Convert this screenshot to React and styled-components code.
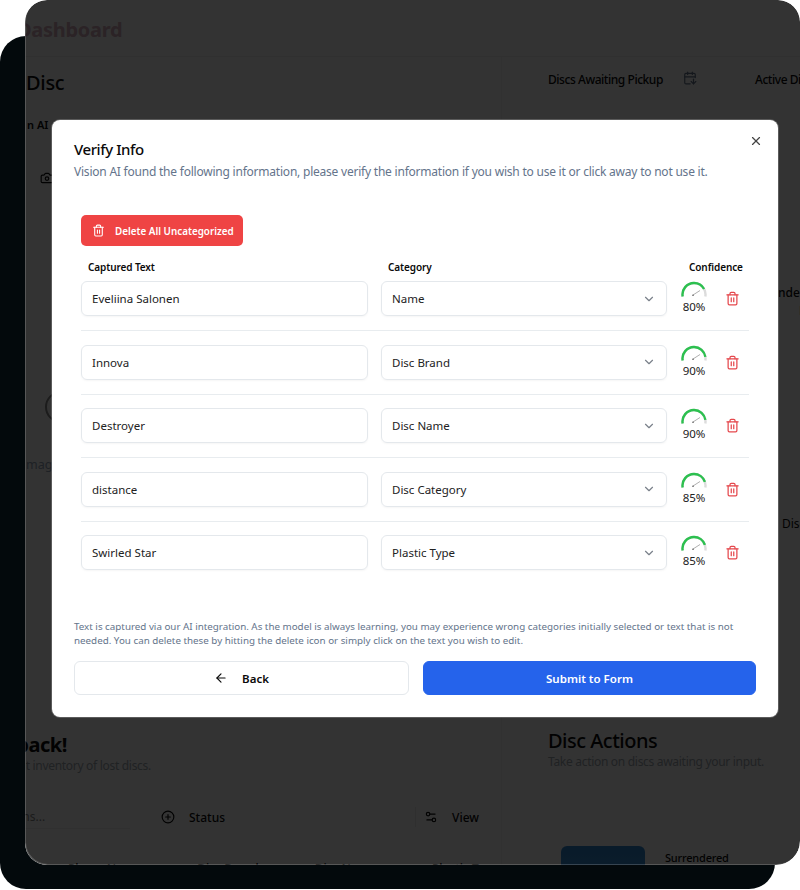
import React from "react";
import styled, { createGlobalStyle } from "styled-components";
import { ArrowLeft, CalendarArrowDown, Camera, ChevronDown, CirclePlus, Settings2, Trash2, X } from "lucide-react";

const Global = createGlobalStyle`
  html, body { margin: 0; padding: 0; background: #fff; }
  body { font-family: "Noto Sans", "Open Sans", sans-serif; color: #0a0a0a; }
  * { box-sizing: border-box; }
`;

const Page = styled.div`
  position: relative;
  width: 800px;
  height: 890px;
  overflow: hidden;
  background: #fff;
`;
const BackPlate = styled.div`
  position: absolute;
  left: 0;
  top: 36px;
  width: 775px;
  height: 853px;
  border-radius: 26px;
  background: #03090c;
`;
const Window = styled.div`
  position: absolute;
  left: 25px;
  top: 0;
  width: 775px;
  height: 865px;
  border-radius: 22px 22px 24px 22px;
  overflow: hidden;
  background: #fff;
`;
const Dim = styled.div`
  position: absolute;
  inset: 0;
  border-radius: inherit;
  background: rgba(0, 0, 0, 0.8);
  box-shadow: inset 1px -1px 0 0 rgba(255, 255, 255, 0.18);
`;
const AppHeader = styled.header`
  height: 57px;
  padding-top: 15px;
  margin-left: -8px;
  border-bottom: 1px solid #ededed;
`;
const AppTitle = styled.h1`
  margin: 0;
  font-size: 20px;
  line-height: 30px;
  font-weight: 700;
  letter-spacing: -0.3px;
  color: #d4aebc;
`;
const Columns = styled.div`
  display: grid;
  grid-template-columns: 477px 300px;
  height: 808px;
`;
const LeftCol = styled.div`
  border-right: 1px solid #f3f3f3;
`;
const CardTitle = styled.h2`
  margin: 0 0 0 1px;
  padding-top: 12px;
  font-size: 20px;
  line-height: 28px;
  font-weight: 500;
  letter-spacing: -0.3px;
`;
const Tab = styled.div`
  margin: 19px 0 0 2px;
  font-size: 11px;
  line-height: 18px;
  font-weight: 600;
`;
const CameraRow = styled.div`
  padding: 37px 0 0 15px;
  height: 61px;
  svg { display: block; }
`;
const Placeholder = styled.div`
  height: 290px;
  display: flex;
  flex-direction: column;
  gap: 34px;
  padding-top: 196px;
`;
const Ring = styled.div`
  width: 32px;
  height: 32px;
  margin-left: 20px;
  border: 2px solid #8a8a8a;
  border-radius: 50%;
`;
const PlaceholderText = styled.div`
  font-size: 12.5px;
  line-height: 16px;
  margin-left: 1px;
  color: #94a3b8;
`;
const SectionTitle = styled.h2`
  margin: 0 0 0 ${(p) => p.$left || 0}px;
  font-size: 20px;
  line-height: 28px;
  font-weight: ${(p) => p.$weight || 500};
  letter-spacing: -0.5px;
  white-space: nowrap;
`;
const SectionText = styled.p`
  margin: -2px 0 0 ${(p) => p.$left || 0}px;
  font-size: 12px;
  line-height: 18px;
  letter-spacing: -0.3px;
  color: #a0a8b0;
  white-space: nowrap;
`;
const Welcome = styled.div`
  margin-top: 246px;
`;
const FilterBar = styled.div`
  display: flex;
  align-items: center;
  height: 24px;
  margin-top: 30px;
  font-size: 12px;
  font-weight: 500;
`;
const Search = styled.div`
  flex: none;
  width: 174px;
  height: 24px;
  margin-left: -69px;
  line-height: 24px;
  font-weight: 400;
  color: #888;
  border-bottom: 1px solid #efefef;
`;
const FilterLabel = styled.span`
  display: inline-flex;
  align-items: center;
  gap: 14px;
  margin-left: ${(p) => p.$left}px;
`;
const Divider = styled.span`
  width: 1px;
  height: 20px;
  margin-left: 190px;
  background: #e8e8e8;
`;
const TableHead = styled.div`
  display: flex;
  margin: 31px 0 0 43px;
  gap: 56px;
  font-size: 12px;
  line-height: 18px;
  font-weight: 500;
  white-space: nowrap;
`;
const RightCol = styled.div`
  padding-left: 46px;
`;
const StatRow = styled.div`
  display: grid;
  grid-template-columns: 149px 120px;
  height: 80px;
  padding-top: 14px;
  font-size: 12px;
  font-weight: 500;
  letter-spacing: -0.45px;
  svg { color: #64748b; }
`;
const Stat = styled.div`
  display: flex;
  align-items: flex-start;
  justify-content: space-between;
  white-space: nowrap;
  line-height: 18px;
  &:last-child { padding-left: 58px; }
`;
const StatValue = styled.div`
  margin: 25px 0 0 ${(p) => p.$left || 0}px;
  font-size: 20px;
  line-height: 28px;
  font-weight: 700;
`;
const PeekText = styled.div`
  margin: ${(p) => p.$top || 0}px 0 0 ${(p) => p.$left}px;
  font-size: 12px;
  line-height: 18px;
  font-weight: ${(p) => p.$weight || 400};
  white-space: nowrap;
`;
const Aside = styled.div`
  margin-top: 194px;
`;
const Thumb = styled.div`
  display: flex;
  gap: 20px;
  margin: 75px 0 0 13px;
`;
const ThumbImage = styled.div`
  width: 84px;
  height: 60px;
  border-radius: 6px;
  background: linear-gradient(#2f86cf, #3f9be4);
`;
const ThumbLabel = styled.span`
  font-size: 11px;
  line-height: 24px;
  font-weight: 500;
  letter-spacing: -0.2px;
`;

const Modal = styled.section`
  position: absolute;
  left: 52px;
  top: 120px;
  width: 726px;
  height: 597px;
  padding: 19px 22px 22px;
  border-radius: 8px;
  background: #fff;
  display: flex;
  flex-direction: column;
  box-shadow: 0 0 0 1px rgba(255, 255, 255, 0.2);
`;
const Close = styled.button`
  position: absolute;
  top: 14px;
  right: 15px;
  width: 14px;
  height: 14px;
  padding: 0;
  border: 0;
  background: none;
  color: #444;
  svg { display: block; }
`;
const ModalTitle = styled.h2`
  margin: 0;
  font-size: 15px;
  line-height: 20px;
  font-weight: 500;
  letter-spacing: -0.42px;
  color: #0a0a0a;
`;
const ModalText = styled.p`
  margin: 4px 0 0;
  font-size: 12px;
  line-height: 18px;
  letter-spacing: -0.22px;
  color: #64748b;
`;
const Body = styled.div`
  padding: 34px 7px 0;
  flex: 1;
`;
const DangerButton = styled.button`
  display: inline-flex;
  align-items: center;
  gap: 10px;
  width: 162px;
  height: 31px;
  padding: 0 0 0 11px;
  border: 0;
  border-radius: 5px;
  background: #ef4444;
  color: #fff;
  font: 600 9.85px "Noto Sans", sans-serif;
  white-space: nowrap;
  svg { display: block; }
`;
const Grid = styled.div`
  display: grid;
  grid-template-columns: 287px 286px 1fr;
  column-gap: 13px;
  width: 668px;
`;
const Heads = styled(Grid)`
  margin-top: 14px;
  height: 21px;
  font-size: 10px;
  line-height: 14px;
  font-weight: 600;
  letter-spacing: -0.1px;
  span { padding-left: 7px; }
  span:last-child { padding-left: 9px; white-space: nowrap; }
`;
const Row = styled(Grid)`
  padding-bottom: 14px;
  margin-bottom: 13.5px;
  border-bottom: 1px solid ${(p) => (p.$last ? "transparent" : "#e8ecef")};
`;
const Field = styled.div`
  display: flex;
  align-items: center;
  justify-content: space-between;
  height: 35px;
  padding: 0 10px;
  border: 1px solid #e4e8ec;
  border-radius: 6px;
  font-size: 11.5px;
  color: #222;
  box-shadow: 0 1px 2px rgba(0, 0, 0, 0.04);
  svg { color: #7a808a; display: block; }
`;
const Confidence = styled.div`
  display: flex;
  align-items: flex-start;
  justify-content: space-between;
  width: 60px;
  height: 35px;
  margin-left: 1px;
  svg { display: block; }
`;
const GaugeBox = styled.div`
  width: 28px;
  text-align: center;
  font-size: 11.5px;
  color: #222;
`;
const GaugeValue = styled.span`
  display: block;
  margin: 3px -4px 0 -6px;
  line-height: 14px;
`;
const TrashButton = styled.span`
  align-self: center;
  color: #e5484d;
  margin-right: 1px;
`;
const Note = styled.p`
  margin: 0;
  font-size: 9.8px;
  line-height: 14px;
  color: #64748b;
  width: 682px;
`;
const Actions = styled.div`
  display: grid;
  grid-template-columns: 335px 333px;
  column-gap: 14px;
  margin-top: 13px;
`;
const ActionButton = styled.button`
  display: flex;
  align-items: center;
  justify-content: center;
  gap: 14px;
  height: 34px;
  border-radius: 6px;
  font: 600 11.5px "Noto Sans", sans-serif;
  border: 1px solid ${(p) => (p.$primary ? "#2563eb" : "#e4e8ec")};
  background: ${(p) => (p.$primary ? "#2563eb" : "#fff")};
  color: ${(p) => (p.$primary ? "#fff" : "#0a0a0a")};
  svg { display: block; }
`;

function Gauge({ value }) {
  const arc = "M1.67 15.5A11.5 11.5 0 1 1 24.33 15.5";
  const len = 40.1;
  return (
    <svg width="28" height="16" viewBox="0 0 28 16" fill="none">
      <path d={arc} stroke="#dcdcdc" strokeWidth="2.4" />
      <path d={arc} stroke="#2cc04f" strokeWidth="2.4" strokeDasharray={`${(len * value) / 100} ${len}`} />
      <path d="M12 14L19 9.5" stroke="#9a9a9a" strokeWidth="0.8" />
      <circle cx="12" cy="14.2" r="0.8" fill="#555" />
    </svg>
  );
}

const rows = [
  ["Eveliina Salonen", "Name", 80],
  ["Innova", "Disc Brand", 90],
  ["Destroyer", "Disc Name", 90],
  ["distance", "Disc Category", 85],
  ["Swirled Star", "Plastic Type", 85],
];

export default function App() {
  return (
    <Page>
      <Global />
      <BackPlate />
      <Window>
        <AppHeader>
          <AppTitle>Dashboard</AppTitle>
        </AppHeader>
        <Columns>
          <LeftCol>
            <CardTitle>Disc</CardTitle>
            <Tab>n AI</Tab>
            <CameraRow>
              <Camera size={14} />
            </CameraRow>
            <Placeholder>
              <Ring />
              <PlaceholderText>mage</PlaceholderText>
            </Placeholder>
            <Welcome>
              <SectionTitle $weight={700} $left={-101}>Welcome back!</SectionTitle>
              <SectionText $left={-62}>Your current inventory of lost discs.</SectionText>
              <FilterBar>
                <Search>Filter columns...</Search>
                <FilterLabel $left={31}>
                  <CirclePlus size={14} />
                  Status
                </FilterLabel>
                <Divider />
                <FilterLabel $left={8}>
                  <Settings2 size={14} />
                  View
                </FilterLabel>
              </FilterBar>
              <TableHead>
                <span>Player Name</span>
                <span>Disc Brand</span>
                <span>Disc Name</span>
                <span>Plastic Type</span>
              </TableHead>
            </Welcome>
          </LeftCol>
          <RightCol>
            <StatRow>
              <Stat>
                <div>
                  Discs Awaiting Pickup
                  <StatValue>0</StatValue>
                </div>
                <CalendarArrowDown size={14} />
              </Stat>
              <Stat>
                <div>
                  Active Discs
                  <StatValue>5</StatValue>
                </div>
              </Stat>
            </StatRow>
            <PeekText $top={147} $left={199} $weight={500}>Surrendered</PeekText>
            <PeekText $left={251}>Discs</PeekText>
            <PeekText $top={195} $left={234}>Disc</PeekText>
            <Aside>
              <SectionTitle>Disc Actions</SectionTitle>
              <SectionText>Take action on discs awaiting your input.</SectionText>
              <Thumb>
                <ThumbImage />
                <ThumbLabel>Surrendered</ThumbLabel>
              </Thumb>
            </Aside>
          </RightCol>
        </Columns>
        <Dim />
      </Window>
      <Modal>
        <Close aria-label="Close">
          <X size={14} />
        </Close>
        <ModalTitle>Verify Info</ModalTitle>
        <ModalText>
          Vision AI found the following information, please verify the information if you wish to use it or click away to not use it.
        </ModalText>
        <Body>
          <DangerButton>
            <Trash2 size={13} />
            Delete All Uncategorized
          </DangerButton>
          <Heads>
            <span>Captured Text</span>
            <span>Category</span>
            <span>Confidence</span>
          </Heads>
          {rows.map(([text, category, value], i) => (
            <Row key={text} $last={i === rows.length - 1}>
              <Field>{text}</Field>
              <Field>
                {category}
                <ChevronDown size={14} />
              </Field>
              <Confidence>
                <GaugeBox>
                  <Gauge value={value} />
                  <GaugeValue>{value}%</GaugeValue>
                </GaugeBox>
                <TrashButton>
                  <Trash2 size={15} />
                </TrashButton>
              </Confidence>
            </Row>
          ))}
        </Body>
        <Note>
          Text is captured via our AI integration. As the model is always learning, you may experience wrong categories initially selected or text that is not needed. You can delete these by hitting the delete icon or simply click on the text you wish to edit.
        </Note>
        <Actions>
          <ActionButton>
            <ArrowLeft size={14} />
            Back
          </ActionButton>
          <ActionButton $primary>Submit to Form</ActionButton>
        </Actions>
      </Modal>
    </Page>
  );
}
